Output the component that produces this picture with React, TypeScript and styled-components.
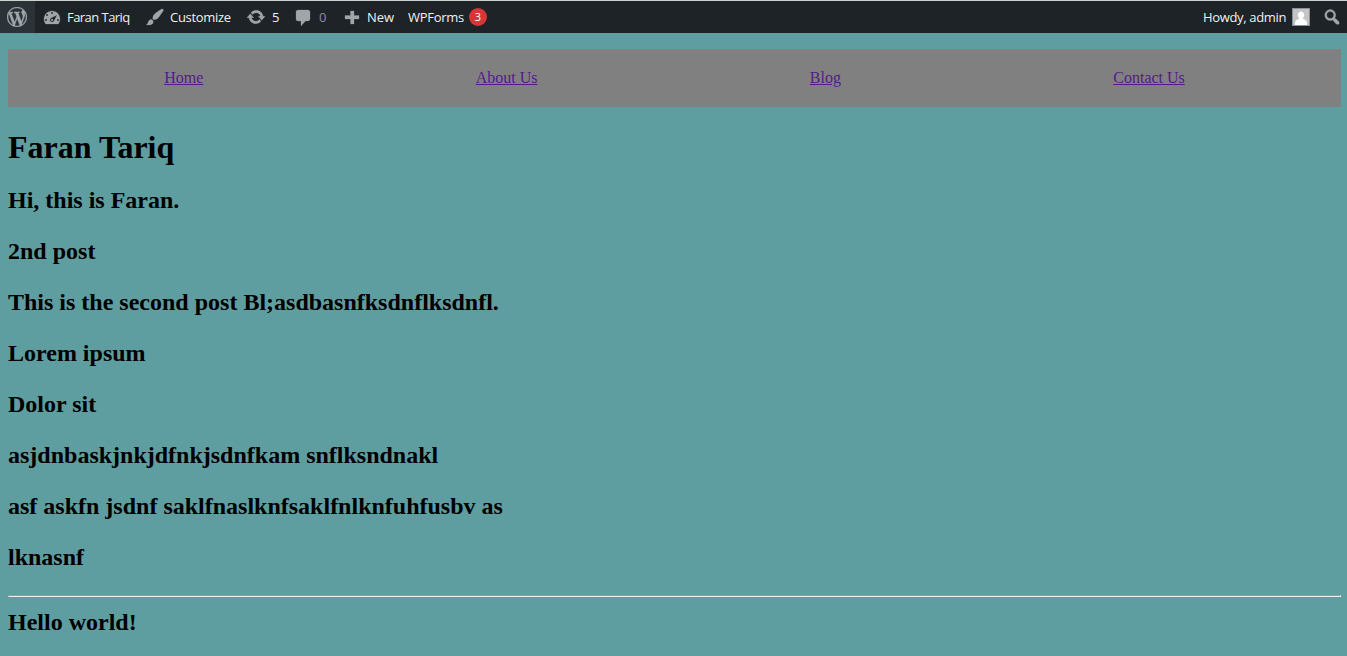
import React from "react";
import styled, { createGlobalStyle } from "styled-components";

const GlobalStyle = createGlobalStyle`
  * { box-sizing: border-box; }
  body {
    margin: 0;
    background: #5f9ea0;
    color: #000;
    font-family: "Liberation Serif", "Times New Roman", serif;
    font-size: 16px;
    overflow: hidden;
  }
`;

const Page = styled.div`
  height: 656px;
  overflow: hidden;
  border-top: 1px solid #cdd2cf;
`;

const AdminBar = styled.header`
  display: flex;
  height: 32px;
  background: #1d2327;
  color: #f0f0f1;
  font: 13px/32px "Open Sans", "Noto Sans", sans-serif;
`;

const BarItem = styled.div<{ $width: number; $active?: boolean }>`
  display: flex;
  align-items: center;
  flex: none;
  width: ${(p) => p.$width}px;
  padding-left: 7px;
  background: ${(p) => (p.$active ? "#2c3338" : "transparent")};
`;

const BarLabel = styled.span<{ $gap?: number; $spacing?: number; $muted?: boolean }>`
  margin-left: ${(p) => p.$gap ?? 0}px;
  letter-spacing: ${(p) => p.$spacing ?? 0}px;
  color: ${(p) => (p.$muted ? "#8b9095" : "inherit")};
  white-space: nowrap;
`;

const Spacer = styled.div`
  flex: 1;
`;

const Glyph = styled.svg`
  display: block;
  flex: none;
  width: 20px;
  height: 20px;
  fill: #a0a5aa;
  stroke: #a0a5aa;
  stroke-width: 0.25;
`;

const Badge = styled.span`
  flex: none;
  width: 18px;
  height: 18px;
  margin-left: 5px;
  border-radius: 9px;
  background: #d63638;
  color: #fff;
  font-size: 11px;
  line-height: 18px;
  text-align: center;
`;

const Avatar = styled.svg`
  display: block;
  flex: none;
  width: 18px;
  height: 18px;
  margin-left: 6px;
  border: 1px solid #8c8f94;
  background: #c4c4c4;
`;

const Main = styled.main`
  padding: 16px 6px 0 8px;
`;

const Menu = styled.nav`
  display: flex;
  justify-content: space-around;
  align-items: center;
  height: 58px;
  padding: 0 20px;
  background: #808080;
`;

const MenuLink = styled.a`
  color: #551a8b;
  line-height: 18px;
  text-decoration: underline;
`;

const SiteTitle = styled.h1`
  margin: 22px 0 21px;
  font-size: 32px;
  line-height: 37px;
`;

const PostLine = styled.h2`
  margin: 0 0 24px;
  font-size: 24px;
  line-height: 27px;
`;

const Divider = styled.hr`
  margin: 0 0 12px;
  height: 2px;
  border: 1px solid;
  border-color: #9a9a9a #eee #eee #9a9a9a;
`;

const icons = {
  wordpress:
    "M20 10c0-5.51-4.49-10-10-10C4.48 0 0 4.49 0 10c0 5.52 4.48 10 10 10 5.51 0 10-4.48 10-10zM7.78 15.37L4.37 6.22c.55-.02 1.17-.08 1.17-.08.5-.06.44-1.13-.06-1.11 0 0-1.45.11-2.37.11-.18 0-.37 0-.58-.01C4.12 2.69 6.87 1.11 10 1.11c2.33 0 4.45.87 6.05 2.34-.68-.11-1.65.39-1.65 1.58 0 .74.45 1.36.9 2.1.35.61.55 1.36.55 2.46 0 1.49-1.4 5-1.4 5l-3.03-8.37c.54-.02.82-.17.82-.17.5-.05.44-1.25-.06-1.22 0 0-1.44.12-2.38.12-.87 0-2.33-.12-2.33-.12-.5-.03-.56 1.2-.06 1.22l.92.08 1.26 3.41zM17.41 10c.24-.64.74-1.87.43-4.25.7 1.29 1.05 2.71 1.05 4.25 0 3.29-1.73 6.24-4.4 7.78.97-2.59 1.94-5.2 2.92-7.78zM6.1 18.09C3.12 16.65 1.11 13.53 1.11 10c0-1.3.23-2.48.72-3.59C3.25 10.3 4.67 14.2 6.1 18.09zm4.03-6.63l2.58 6.98c-.86.29-1.76.45-2.71.45-.79 0-1.57-.11-2.29-.33.81-2.38 1.62-4.74 2.42-7.1z",
  dashboard:
    "M3.76 17.01h12.48C17.34 15.63 18 13.9 18 12c0-4.41-3.58-8-8-8s-8 3.59-8 8c0 1.9.66 3.63 1.76 5.01zM9 6c0-.55.45-1 1-1s1 .45 1 1-.45 1-1 1-1-.45-1-1zM4 8c0-.55.45-1 1-1s1 .45 1 1-.45 1-1 1-1-.45-1-1zm4.52 3.4c.84-.83 6.51-3.5 6.51-3.5s-2.66 5.68-3.49 6.51c-.84.84-2.18.84-3.02 0-.83-.83-.83-2.18 0-3.01zM3 13c0-.55.45-1 1-1s1 .45 1 1-.45 1-1 1-1-.45-1-1zm6 0c0 .55.45 1 1 1s1-.45 1-1-.45-1-1-1-1 .45-1 1zm6 0c0-.55.45-1 1-1s1 .45 1 1-.45 1-1 1-1-.45-1-1z",
  brush:
    "M18.33 3.57s.27-.8-.31-1.36c-.53-.52-1.22-.24-1.22-.24-.61.3-5.76 3.47-7.67 5.57-.86.96-2.06 3.79-1.09 4.82.92.98 3.96-.17 4.79-1 2.06-2.06 5.21-7.17 5.5-7.79zM1.4 17.65c2.37-1.56 1.46-3.41 3.23-4.64.93-.65 2.22-.62 3.08.29.63.67.8 2.57-.16 3.46-1.57 1.45-4 1.55-6.15.89z",
  update:
    "M10.2 3.28c3.53 0 6.43 2.61 6.92 6h2.08l-3.5 4-3.5-4h2.32c-.45-1.97-2.21-3.45-4.32-3.45-1.45 0-2.73.71-3.54 1.78L4.95 5.66C6.23 4.2 8.11 3.28 10.2 3.28zm-.4 13.44c-3.52 0-6.43-2.61-6.92-6H.8l3.5-4c1.17 1.33 2.33 2.67 3.5 4H5.48c.45 1.97 2.21 3.45 4.32 3.45 1.45 0 2.73-.71 3.54-1.78l1.71 1.95c-1.28 1.46-3.15 2.38-5.25 2.38z",
  comment:
    "M5 3h10c1.1 0 2 .9 2 2v7c0 1.1-.9 2-2 2h-2.5l-4.5 5v-5H5c-1.1 0-2-.9-2-2V5c0-1.1.9-2 2-2z",
  plus: "M17 8.500v3.500h-5v5H8.500v-5H3V8.500h5.500V4H12v4.500z",
  search:
    "M12.14 4.18c1.87 1.87 2.11 4.75.72 6.89.12.1.22.21.36.31.2.16.47.36.81.59.34.24.56.39.66.47.42.31.73.57.94.78.32.32.6.65.84 1 .25.35.44.69.59 1.04.14.35.21.68.18 1-.02.32-.14.59-.36.81s-.49.34-.81.36c-.31.02-.65-.04-.99-.19-.35-.14-.7-.34-1.04-.59-.35-.24-.68-.52-1-.84-.21-.21-.47-.52-.77-.93-.1-.13-.25-.35-.47-.66-.22-.32-.4-.57-.56-.78-.16-.2-.29-.35-.44-.5-2.07 1.09-4.69.76-6.44-.98-2.14-2.15-2.14-5.64 0-7.78 2.15-2.15 5.63-2.15 7.78 0zm-1.41 6.36c1.36-1.37 1.36-3.58 0-4.95-1.37-1.37-3.59-1.37-4.95 0-1.37 1.37-1.37 3.58 0 4.95 1.36 1.37 3.58 1.37 4.95 0z",
};

const Icon = ({ name }: { name: keyof typeof icons }) => (
  <Glyph viewBox="0 0 20 20" aria-hidden="true">
    <path d={icons[name]} />
  </Glyph>
);

const posts = [
  "Hi, this is Faran.",
  "2nd post",
  "This is the second post Bl;asdbasnfksdnflksdnfl.",
  "Lorem ipsum",
  "Dolor sit",
  "asjdnbaskjnkjdfnkjsdnfkam snflksndnakl",
  "asf askfn jsdnf saklfnaslknfsaklfnlknfuhfusbv as",
  "lknasnf",
];

export default function App() {
  return (
    <Page>
      <GlobalStyle />
      <AdminBar>
        <BarItem $width={35} $active>
          <Icon name="wordpress" />
        </BarItem>
        <BarItem $width={103}>
          <Icon name="dashboard" />
          <BarLabel $gap={5} $spacing={-0.55}>Faran Tariq</BarLabel>
        </BarItem>
        <BarItem $width={101}>
          <Icon name="brush" />
          <BarLabel $gap={5} $spacing={-0.3}>Customize</BarLabel>
        </BarItem>
        <BarItem $width={47}>
          <Icon name="update" />
          <BarLabel $gap={6}>5</BarLabel>
        </BarItem>
        <BarItem $width={49}>
          <Icon name="comment" />
          <BarLabel $gap={6} $muted>0</BarLabel>
        </BarItem>
        <BarItem $width={66}>
          <Icon name="plus" />
          <BarLabel $gap={5}>New</BarLabel>
        </BarItem>
        <BarItem $width={90}>
          <BarLabel $spacing={-0.3}>WPForms</BarLabel>
          <Badge>3</Badge>
        </BarItem>
        <Spacer />
        <BarItem $width={119}>
          <BarLabel $spacing={-0.34}>Howdy, admin</BarLabel>
          <Avatar viewBox="0 0 16 16" aria-hidden="true">
            <path fill="#fff" d="M8 2.500a3.500 3.700 0 0 1 2 6.600v.9c2 .5 4 1.500 4 4v2H2v-2c0-2.500 2-3.500 4-4v-.9a3.500 3.700 0 0 1 2-6.600z" />
          </Avatar>
        </BarItem>
        <BarItem $width={32}>
          <Icon name="search" />
        </BarItem>
      </AdminBar>
      <Main>
        <Menu>
          <MenuLink href="#">Home</MenuLink>
          <MenuLink href="#">About Us</MenuLink>
          <MenuLink href="#">Blog</MenuLink>
          <MenuLink href="#">Contact Us</MenuLink>
        </Menu>
        <SiteTitle>Faran Tariq</SiteTitle>
        {posts.map((post) => (
          <PostLine key={post}>{post}</PostLine>
        ))}
        <Divider />
        <PostLine>Hello world!</PostLine>
      </Main>
    </Page>
  );
}
